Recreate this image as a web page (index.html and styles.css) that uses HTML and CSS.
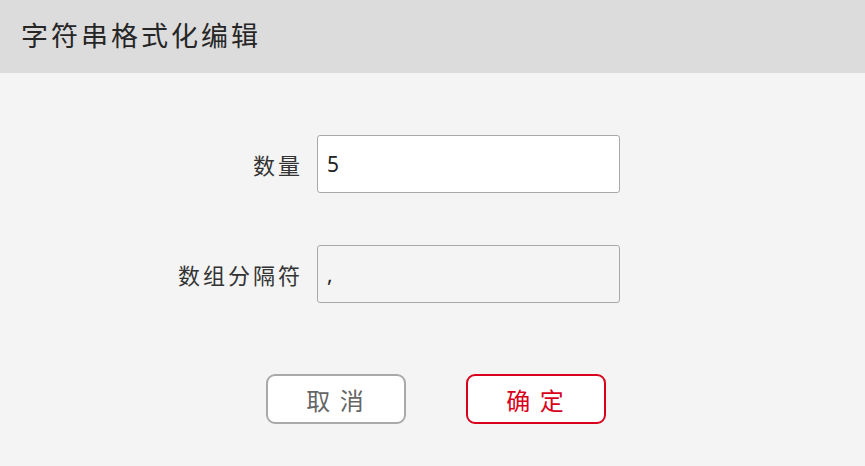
FILE: index.html
```html
<!DOCTYPE html>
<html lang="zh-CN">
<head>
<meta charset="utf-8">
<title>字符串格式化编辑</title>
<link rel="stylesheet" href="styles.css">
</head>
<body>
<div class="dialog">
  <header class="dialog-header">
    <h1 class="dialog-title">字符串格式化编辑</h1>
  </header>
  <main class="dialog-body">
    <div class="form">
      <label class="form-label">数量</label>
      <div class="form-input">5</div>
      <label class="form-label">数组分隔符</label>
      <div class="form-input form-input-disabled">,</div>
    </div>
    <div class="actions">
      <button class="btn btn-cancel">取 消</button>
      <button class="btn btn-confirm">确 定</button>
    </div>
  </main>
</div>
</body>
</html>
```
FILE: styles.css
```css
html, body {
  margin: 0;
  padding: 0;
}
body {
  width: 865px;
  height: 466px;
  background: #f4f4f4;
  font-family: "Noto Sans", "Noto Sans CJK SC", sans-serif;
  color: #333;
  overflow: hidden;
}
.dialog {
  display: flex;
  flex-direction: column;
  height: 466px;
}
.dialog-header {
  height: 73px;
  background: #dcdcdc;
  display: flex;
  align-items: center;
  padding-left: 21px;
  box-sizing: border-box;
}
.dialog-title {
  margin: 0;
  font-size: 27px;
  font-weight: 400;
  letter-spacing: 3px;
  color: #262626;
  line-height: 1;
  padding-bottom: 2px;
}
.dialog-body {
  flex: 1;
  background: #f4f4f4;
  padding-top: 62px;
}
.form {
  display: grid;
  grid-template-columns: 300px 303px;
  column-gap: 17px;
  row-gap: 52px;
  align-items: center;
}
.form-label {
  text-align: right;
  font-size: 22px;
  letter-spacing: 3px;
  margin-right: -3px;
  color: #333;
}
.form-input {
  height: 58px;
  box-sizing: border-box;
  border: 1px solid #a9a9a9;
  border-radius: 3px;
  background: #ffffff;
  display: flex;
  align-items: center;
  padding-left: 9px;
  font-size: 21px;
  color: #222;
}
.form-input-disabled {
  background: #f4f4f4;
}
.actions {
  display: flex;
  gap: 60px;
  margin-left: 266px;
  margin-top: 71px;
}
.btn {
  width: 140px;
  height: 50px;
  box-sizing: border-box;
  border-radius: 9px;
  background: #ffffff;
  font-family: "Noto Sans CJK SC", sans-serif;
  font-size: 24px;
  letter-spacing: 2px;
  padding: 0;
  display: flex;
  align-items: center;
  justify-content: center;
}
.btn-cancel {
  border: 2px solid #a9a9a9;
  color: #666;
}
.btn-confirm {
  border: 2px solid #d9001b;
  color: #d9001b;
}
```
